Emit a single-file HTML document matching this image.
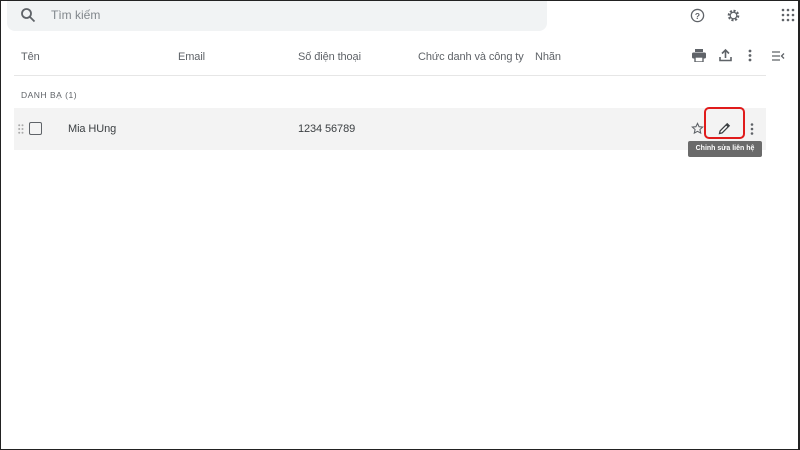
<!DOCTYPE html>
<html><head><meta charset="utf-8"><style>
*{margin:0;padding:0;box-sizing:border-box}
body{width:800px;height:450px;overflow:hidden;background:#fff;font-family:"Liberation Sans",Arial,sans-serif;color:#3c4043;position:relative}
.frame{position:absolute;left:0;top:0;width:800px;height:450px;border:1px solid #222;border-right:2px solid #222;pointer-events:none}
.abs{position:absolute}
.search{left:7px;top:0;width:540px;height:31px;background:#f1f3f4;border-radius:0 0 8px 8px}
.t{font-size:11px;color:#3c4043;letter-spacing:-0.1px}
.hdr{top:51px;font-size:11px;color:#5f6368;letter-spacing:-0.1px}
</style></head><body>
<div class="abs search"></div>
<svg class="abs" style="left:20px;top:7px" width="16" height="16" viewBox="0 0 16 16"><circle cx="6.5" cy="6.5" r="4.5" fill="none" stroke="#5f6368" stroke-width="1.8"/><path d="M10 10l4.5 4.5" stroke="#5f6368" stroke-width="1.8"/></svg>
<div class="abs" style="left:51px;top:8px;font-size:12px;color:#80868b">Tìm kiếm</div>
<svg class="abs" style="left:690px;top:8px" width="15" height="15" viewBox="0 0 16 16"><circle cx="8" cy="8" r="6.5" fill="none" stroke="#5f6368" stroke-width="1.4"/><text x="8" y="11.5" font-size="9" text-anchor="middle" fill="#5f6368" font-family="Liberation Sans" font-weight="bold">?</text></svg>
<svg class="abs" style="left:726px;top:8px" width="15" height="15" viewBox="0 0 16 16"><circle cx="8" cy="8" r="5" fill="none" stroke="#5f6368" stroke-width="2.4" stroke-dasharray="2.2 1.7"/><circle cx="8" cy="8" r="3.5" fill="none" stroke="#5f6368" stroke-width="1.3"/></svg>
<svg class="abs" style="left:781px;top:8px" width="14" height="14" viewBox="0 0 14 14" fill="#5f6368"><circle cx="2" cy="2" r="1.3"/><circle cx="7" cy="2" r="1.3"/><circle cx="12" cy="2" r="1.3"/><circle cx="2" cy="7" r="1.3"/><circle cx="7" cy="7" r="1.3"/><circle cx="12" cy="7" r="1.3"/><circle cx="2" cy="12" r="1.3"/><circle cx="7" cy="12" r="1.3"/><circle cx="12" cy="12" r="1.3"/></svg>
<div class="abs hdr" style="left:21px">Tên</div>
<div class="abs hdr" style="left:178px">Email</div>
<div class="abs hdr" style="left:298px">Số điện thoại</div>
<div class="abs hdr" style="left:418px">Chức danh và công ty</div>
<div class="abs hdr" style="left:535px">Nhãn</div>
<svg class="abs" style="left:692px;top:49px" width="14" height="13" viewBox="0 0 14 13" fill="#5f6368"><rect x="3" y="0" width="8" height="3"/><rect x="0" y="3.5" width="14" height="6" rx="1.5"/><rect x="3" y="8" width="8" height="5" fill="#fff" stroke="#5f6368" stroke-width="1.4"/></svg>
<svg class="abs" style="left:719px;top:48px" width="13" height="14" viewBox="0 0 13 14"><path d="M6.5 10V2M3 5.5l3.5-3.5 3.5 3.5M1 9v3.5h11V9" fill="none" stroke="#5f6368" stroke-width="1.6"/></svg>
<svg class="abs" style="left:748px;top:49px" width="4" height="13" viewBox="0 0 4 13" fill="#5f6368"><circle cx="2" cy="2" r="1.4"/><circle cx="2" cy="6.5" r="1.4"/><circle cx="2" cy="11" r="1.4"/></svg>
<svg class="abs" style="left:772px;top:51px" width="13" height="10" viewBox="0 0 13 10"><path d="M0 1h8M0 5h8M0 9h8M12 2.5L9.5 5 12 7.5" fill="none" stroke="#5f6368" stroke-width="1.3"/></svg>
<div class="abs" style="left:14px;top:75px;width:752px;height:1px;background:#e6e6e6"></div>
<div class="abs" style="left:21px;top:90px;font-size:8.5px;letter-spacing:.5px;color:#5f6368">DANH BẠ (1)</div>
<div class="abs" style="left:14px;top:108px;width:752px;height:42px;background:#f3f3f3"></div>
<svg class="abs" style="left:18px;top:124px" width="6" height="10" viewBox="0 0 6 10" fill="#aaa"><circle cx="1.2" cy="1.2" r="1"/><circle cx="4.5" cy="1.2" r="1"/><circle cx="1.2" cy="5" r="1"/><circle cx="4.5" cy="5" r="1"/><circle cx="1.2" cy="8.8" r="1"/><circle cx="4.5" cy="8.8" r="1"/></svg>
<div class="abs" style="left:29px;top:122px;width:13px;height:13px;border:1.6px solid #5f6368;border-radius:2px"></div>
<div class="abs t" style="left:68px;top:123px">Mia HUng</div>
<div class="abs t" style="left:298px;top:123px">1234 56789</div>
<svg class="abs" style="left:691px;top:122px" width="13" height="13" viewBox="0 0 24 24"><path d="M12 2.5l2.9 6.2 6.6.7-5 4.5 1.4 6.6L12 17.2l-5.9 3.3 1.4-6.6-5-4.5 6.6-.7z" fill="none" stroke="#5f6368" stroke-width="2"/></svg>
<svg class="abs" style="left:718px;top:122px" width="13" height="13" viewBox="0 0 13 13"><path d="M1.5 11.5l.6-2.6L9.2 1.8l2 2-7.1 7.1z" fill="#fff" stroke="#3c4043" stroke-width="1.3"/><path d="M8.5 2.5l2 2" stroke="#3c4043" stroke-width="2"/></svg>
<div class="abs" style="left:704px;top:107px;width:41px;height:32px;border:2.5px solid #e01b1b;border-radius:5px"></div>
<svg class="abs" style="left:750px;top:123px" width="4" height="12" viewBox="0 0 4 12" fill="#5f6368"><circle cx="2" cy="1.5" r="1.3"/><circle cx="2" cy="6" r="1.3"/><circle cx="2" cy="10.5" r="1.3"/></svg>
<div class="abs" style="left:688px;top:141px;width:74px;height:16px;background:#6a6a6a;border-radius:2px;color:#fff;font-size:7px;font-weight:bold;line-height:16px;text-align:center">Chỉnh sửa liên hệ</div>
<div class="frame"></div>
</body></html>
